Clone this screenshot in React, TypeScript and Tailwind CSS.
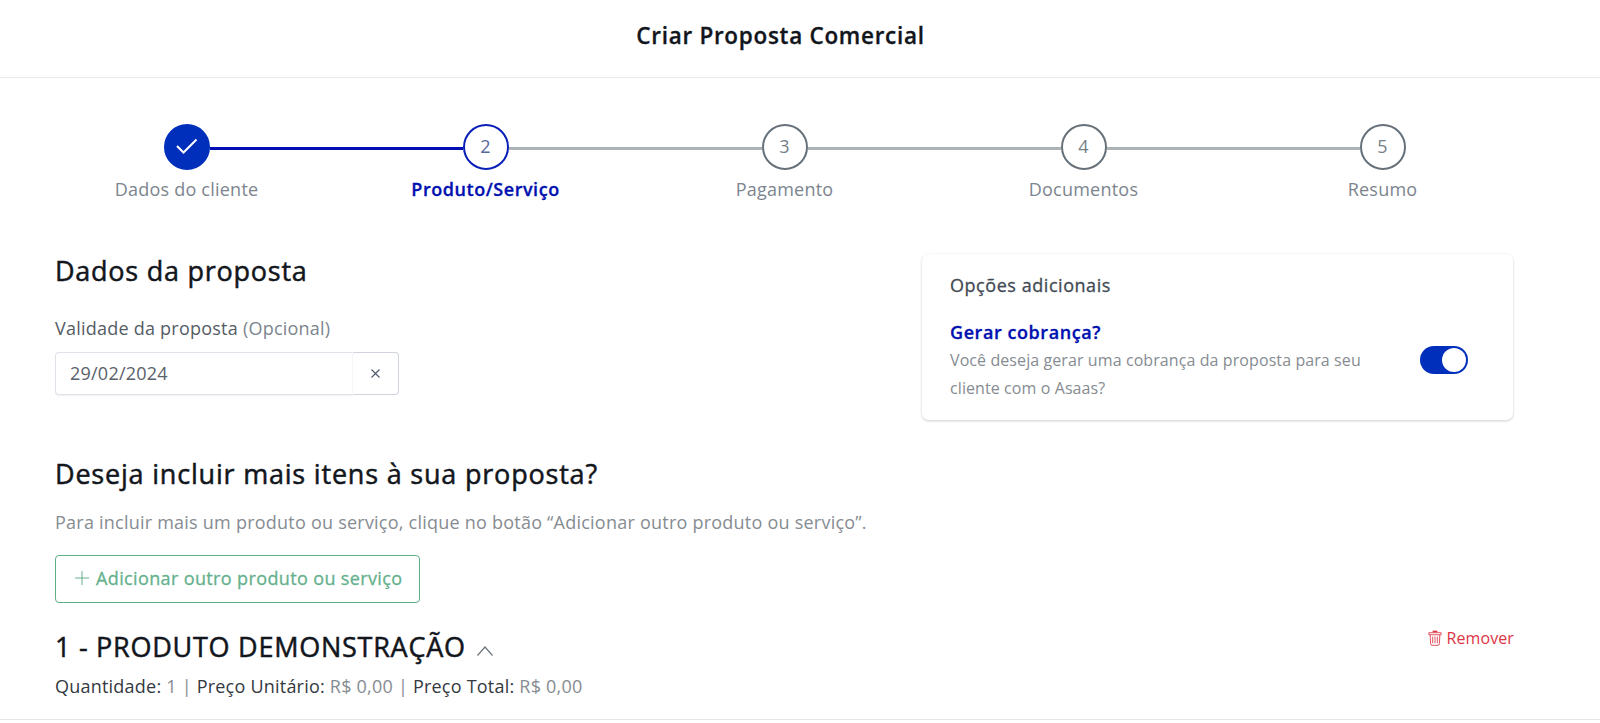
import { useState } from 'react';

interface Step {
  label: string;
  status: 'done' | 'active' | 'pending';
}

const STEPS: Step[] = [
  { label: 'Dados do cliente', status: 'done' },
  { label: 'Produto/Serviço', status: 'active' },
  { label: 'Pagamento', status: 'pending' },
  { label: 'Documentos', status: 'pending' },
  { label: 'Resumo', status: 'pending' },
];

const circleStyles = {
  done: 'border-[#002fbb] bg-[#002fbb] text-white',
  active: 'border-[#0a1fb8] bg-white text-[#54699c]',
  pending: 'border-[#67717a] bg-white text-[#757f89]',
};

const headingStyle = 'text-[27px] leading-10 text-[#12161c] [-webkit-text-stroke:0.5px_#12161c]';

function Stepper() {
  return (
    <div className="ml-[37px] grid w-[1495px] grid-cols-5 pt-[46px]">
      {STEPS.map((step, index) => (
        <div key={step.label} className="flex flex-col items-center">
          <div className="flex w-full items-center">
            <div
              className={`mt-[3px] h-[2.5px] flex-1 ${
                index === 0 ? 'bg-transparent' : index === 1 ? 'bg-[#000fb5]' : 'bg-[#abb3b6]'
              }`}
            />
            <div
              className={`flex size-[46px] items-center justify-center rounded-full border-2 pb-0.5 text-[18px] ${circleStyles[step.status]}`}
            >
              {step.status === 'done' ? (
                <svg width="22" height="16" viewBox="0 0 22 16" fill="none" stroke="currentColor" strokeWidth="2">
                  <path d="M1 8 L7.5 14.5 L20.5 1.5" />
                </svg>
              ) : (
                index + 1
              )}
            </div>
            <div
              className={`mt-[3px] h-[2.5px] flex-1 ${
                index === STEPS.length - 1 ? 'bg-transparent' : index === 0 ? 'bg-[#000fb5]' : 'bg-[#abb3b6]'
              }`}
            />
          </div>
          <div
            className={`mt-[5px] text-[18px] leading-7 ${
              step.status === 'active'
                ? 'font-semibold tracking-[0.55px] text-[#0010b0] [-webkit-text-stroke:0.3px_#0010b0]'
                : 'tracking-[0.23px] text-[#7c858e]'
            }`}
          >
            {step.label}
          </div>
        </div>
      ))}
    </div>
  );
}

function Toggle({ checked, onChange }: { checked: boolean; onChange: () => void }) {
  return (
    <button
      type="button"
      role="switch"
      aria-checked={checked}
      onClick={onChange}
      className={`flex h-7 w-12 items-center rounded-full px-[2px] ${
        checked ? 'justify-end bg-[#002fbb]' : 'justify-start bg-gray-400'
      }`}
    >
      <span className="size-6 rounded-full bg-white" />
    </button>
  );
}

function OptionsCard() {
  const [enabled, setEnabled] = useState(true);

  return (
    <div className="h-[166px] w-[591px] rounded-[7px] bg-white pl-7 pr-[45px] pt-[17px] shadow-[0_1px_3px_rgba(0,0,0,0.2)]">
      <h3 className="text-[18px] leading-7 tracking-[0.55px] text-[#414a53] [-webkit-text-stroke:0.3px_#414a53]">
        Opções adicionais
      </h3>
      <div className="mt-[19px] flex items-center justify-between">
        <div>
          <div className="text-[18px] font-semibold leading-7 tracking-[0.57px] text-[#0010b0] [-webkit-text-stroke:0.3px_#0010b0]">
            Gerar cobrança?
          </div>
          <p className="w-[430px] text-[16px] leading-7 tracking-[0.09px] text-[#868c92]">
            Você deseja gerar uma cobrança da proposta para seu cliente com o Asaas?
          </p>
        </div>
        <Toggle checked={enabled} onChange={() => setEnabled(!enabled)} />
      </div>
    </div>
  );
}

function DateField() {
  return (
    <div className="mt-[23px] tracking-[0.23px]">
      <label className="block text-[18px] leading-7 text-[#545c64]">
        Validade da proposta <span className="text-[#7c858e]">(Opcional)</span>
      </label>
      <div className="mt-[10px] flex h-[43px] w-[344px]">
        <div className="flex flex-1 items-center rounded-l-[4px] border border-r-[#f5f6f7] border-[#dfe2e9] pl-3.5 text-[18px] text-[#59616a] shadow-[0_1px_1px_rgba(0,0,0,0.06)]">
          29/02/2024
        </div>
        <button
          type="button"
          aria-label="Limpar"
          className="flex w-[46px] items-center justify-center rounded-r-[4px] border border-l-0 border-[#d0d4dd] pb-px pr-px text-[#4d5a6b]"
        >
          <svg width="9" height="9" viewBox="0 0 9 9" fill="none" stroke="currentColor" strokeWidth="1.1">
            <path d="M0.5 0.5 L8.5 8.5 M8.5 0.5 L0.5 8.5" />
          </svg>
        </button>
      </div>
    </div>
  );
}

function TrashIcon() {
  return (
    <svg width="14" height="17" viewBox="0 0 15 17" fill="none" stroke="currentColor" strokeWidth="0.9">
      <path d="M5 1 H10" strokeWidth="1.8" />
      <path d="M0.9 2.3 H14.1 V4.5 H0.9 Z" />
      <path d="M2.3 4.5 L2.8 14.3 Q2.9 15.8 4.3 15.8 H10.7 Q12.1 15.8 12.2 14.3 L12.7 4.5" />
      <path d="M5 6.5 V13.5 M7.5 6.5 V13.5 M10 6.5 V13.5" />
    </svg>
  );
}

function ProductItem() {
  return (
    <div className="flex justify-between">
      <div className="mt-[24px]">
        <h2 className={`flex items-center tracking-[0.74px] ${headingStyle}`}>
          1 - PRODUTO DEMONSTRAÇÃO
          <svg
            className="ml-[11px] mt-2 text-[#6c757d]"
            width="16"
            height="10"
            viewBox="0 0 16 10"
            fill="none"
            stroke="currentColor"
            strokeWidth="1.2"
          >
            <path d="M0.5 9.5 L8 1 L15.5 9.5" />
          </svg>
        </h2>
        <p className="mt-[5px] text-[18px] leading-7 tracking-[0.22px] text-[#868c92]">
          <span className="text-[#33393f]">Quantidade:</span> 1 | <span className="text-[#33393f]">Preço Unitário:</span>{' '}
          R$ 0,00 | <span className="text-[#33393f]">Preço Total:</span> R$ 0,00
        </p>
      </div>
      <button
        type="button"
        className="-mr-px mt-[21px] flex h-7 items-center gap-[5px] text-[16px] tracking-[0.09px] text-[#dc3545]"
      >
        <TrashIcon />
        Remover
      </button>
    </div>
  );
}

export default function App() {
  return (
    <div className="h-[723px] w-[1600px] overflow-hidden bg-white font-['Open_Sans',sans-serif]">
      <header className="flex h-[78px] justify-center border-b border-[#e9eaeb] pr-[39px] pt-[18px]">
        <h1 className="text-[22.5px] font-semibold leading-9 tracking-[0.7px] text-[#12161c] [-webkit-text-stroke:0.3px_#12161c]">
          Criar Proposta Comercial
        </h1>
      </header>

      <Stepper />

      <main className="pl-[55px] pr-[87px]">
        <div className="mt-[51px] flex justify-between">
          <div className="-mt-[3px]">
            <h2 className={`tracking-[0.75px] ${headingStyle}`}>Dados da proposta</h2>
            <DateField />
          </div>
          <OptionsCard />
        </div>

        <h2 className={`mt-[34px] tracking-[0.8px] ${headingStyle}`}>Deseja incluir mais itens à sua proposta?</h2>
        <p className="mt-[14px] text-[18px] leading-7 tracking-[0.23px] text-[#868c92]">
          Para incluir mais um produto ou serviço, clique no botão “Adicionar outro produto ou serviço”.
        </p>
        <button
          type="button"
          className="mt-[19px] flex h-12 w-[365px] items-center rounded-[4px] border border-[#5fae88] pb-0.5 pl-[19px] text-[18px] tracking-[0.37px] text-[#65b18d] [-webkit-text-stroke:0.3px_#65b18d]"
        >
          <svg className="mr-[7px]" width="14" height="14" viewBox="0 0 14 14" fill="none" stroke="currentColor">
            <path d="M7 0 V14 M0 7 H14" />
          </svg>
          Adicionar outro produto ou serviço
        </button>

        <ProductItem />
      </main>

      <div className="mt-[19px] border-t border-[#e4e5e6]" />
    </div>
  );
}
